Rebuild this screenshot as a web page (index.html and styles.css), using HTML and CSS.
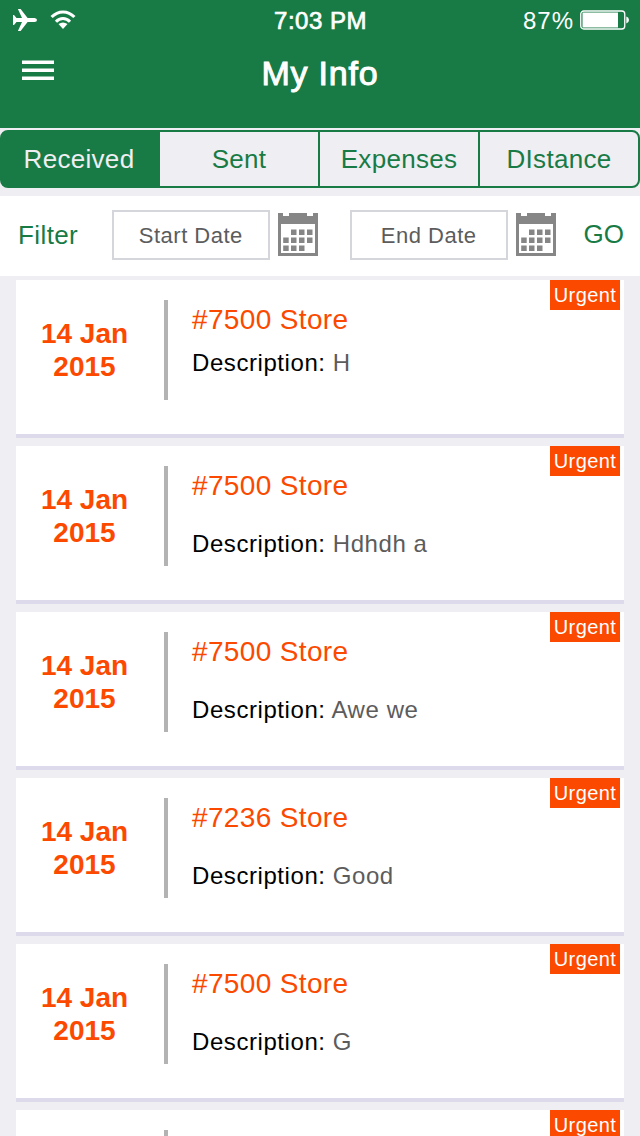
FILE: index.html
```html
<!DOCTYPE html>
<html lang="en">

<head>
	<meta charset="UTF-8">
	<title>My Info</title>
	<link rel="stylesheet" href="styles.css">
</head>

<body>
	<!-- Icons used more than once -->
	<svg class="icon-defs" width="0" height="0">
		<symbol id="calendar" viewBox="0 0 40 43">
			<path fill="#868686" fill-rule="evenodd" d="M0 0H5V3H11V0H29V3H35V0H40V43H0ZM3 11V40H37V11Z" />
			<path fill="#868686" d="M13 16.500h5.500v5.500H13zM21 16.500h5.500v5.500H21zM29 16.500h5.500v5.500H29zM5.200 24.500h5.500V30H5.200zM13 24.500h5.500V30H13zM21 24.500h5.500V30H21zM29 24.500h5.500V30H29zM5.200 32.500h5.500V38H5.200zM13 32.500h5.500V38H13zM21 32.500h5.500V38H21z" />
		</symbol>
	</svg>

	<header class="header">
		<div class="status-bar">
			<div class="status-left">
				<svg class="plane" width="24" height="22" viewBox="0 0 24 22" fill="#fff">
					<path d="M0 6H1L3.500 8.900H9L4.900 0H7.600L14.600 8.900H21.500Q24 9.200 24 11Q24 12.800 21.500 13.100H14.600L7.600 22H4.900L9 13.100H3.500L1 16H0Z" />
				</svg>
				<svg class="wifi" width="26" height="20" viewBox="0 0 26 20">
					<path fill="none" stroke="#fff" stroke-width="3" d="M1.600 7.100C8 .2 18 .2 24.400 7.100M6 11.700C9.900 7.500 16.100 7.500 20 11.700" />
					<path fill="#fff" d="M13 19L8.500 14.100Q13 10.700 17.500 14.100Z" />
				</svg>
			</div>
			<div class="time">7:03 PM</div>
			<div class="status-right">
				<span class="percent">87%</span>
				<svg width="50" height="20" viewBox="0 0 50 20">
					<rect x=".75" y="1" width="44" height="18" rx="3" fill="none" stroke="#fff" stroke-width="1.300" />
					<rect x="2.500" y="2.500" width="35.500" height="15" fill="#fff" />
					<path fill="#fff" d="M46.300 6.500Q49 7.300 49 10T46.300 13.500Z" />
				</svg>
			</div>
		</div>
		<div class="nav-bar">
			<div class="menu"><span></span><span></span><span></span></div>
			<h1>My Info</h1>
		</div>
	</header>

	<nav class="tabs">
		<a class="tab active">Received</a>
		<a class="tab">Sent</a>
		<a class="tab">Expenses</a>
		<a class="tab">DIstance</a>
	</nav>

	<div class="filter">
		<span class="filter-label">Filter</span>
		<div class="date-box">Start Date</div>
		<svg class="calendar" width="40" height="43"><use href="#calendar" /></svg>
		<div class="date-box end">End Date</div>
		<svg class="calendar" width="40" height="43"><use href="#calendar" /></svg>
		<span class="go">GO</span>
	</div>

	<main class="list">
		<div class="card short">
			<div class="date">14 Jan<br>2015</div>
			<div class="info">
				<h2>#7500 Store</h2>
				<p>Description: <span>H</span></p>
			</div>
			<div class="urgent">Urgent</div>
		</div>
		<div class="card">
			<div class="date">14 Jan<br>2015</div>
			<div class="info">
				<h2>#7500 Store</h2>
				<p>Description: <span>Hdhdh a</span></p>
			</div>
			<div class="urgent">Urgent</div>
		</div>
		<div class="card">
			<div class="date">14 Jan<br>2015</div>
			<div class="info">
				<h2>#7500 Store</h2>
				<p>Description: <span>Awe we</span></p>
			</div>
			<div class="urgent">Urgent</div>
		</div>
		<div class="card">
			<div class="date">14 Jan<br>2015</div>
			<div class="info">
				<h2>#7236 Store</h2>
				<p>Description: <span>Good</span></p>
			</div>
			<div class="urgent">Urgent</div>
		</div>
		<div class="card">
			<div class="date">14 Jan<br>2015</div>
			<div class="info">
				<h2>#7500 Store</h2>
				<p>Description: <span>G</span></p>
			</div>
			<div class="urgent">Urgent</div>
		</div>
		<div class="card last">
			<div class="date"></div>
			<div class="urgent">Urgent</div>
		</div>
	</main>
</body>

</html>
```
FILE: styles.css
```css
* {
	box-sizing: border-box;
	margin: 0;
	padding: 0;
}

body {
	height: 1136px;
	overflow: hidden;
	background: #efeef3;
	font-family: "Liberation Sans", Arial, sans-serif;
}

svg {
	display: block;
	flex-shrink: 0;
}

.icon-defs {
	position: absolute;
}

/* Header */
.header {
	height: 128px;
	background: #187b45;
	color: #fff;
}

.status-bar {
	height: 40px;
	display: grid;
	grid-template-columns: 1fr auto 1fr;
	align-items: center;
	padding: 0 11px 0 13px;
	font-size: 24px;
}

.status-left,
.status-right {
	display: flex;
	align-items: center;
}

.status-left {
	gap: 13px;
}

.status-right {
	justify-content: flex-end;
	gap: 6px;
	margin-right: -1px;
}

.time {
	letter-spacing: 0.5px;
	-webkit-text-stroke: 0.7px #fff;
	padding: 1px 1px 0 0;
}

.percent {
	letter-spacing: 1px;
	padding-top: 1px;
}

.nav-bar {
	height: 66px;
	display: grid;
	grid-template-columns: 1fr auto 1fr;
	align-items: center;
	padding: 0 22px;
}

.menu {
	width: 32px;
	display: flex;
	flex-direction: column;
	gap: 4px;
	margin-top: -6px;
}

.menu span {
	height: 4px;
	background: #fff;
	border-top: 1px solid #8bbda2;
}

h1 {
	font-size: 34px;
	font-weight: normal;
	letter-spacing: 0.8px;
	-webkit-text-stroke: 1px #fff;
}

/* Tabs */
.tabs {
	display: flex;
	height: 58px;
	margin: 2px 0 8px;
	border: 2px solid #187b45;
	border-radius: 8px;
}

.tab {
	width: 160px;
	display: flex;
	align-items: center;
	justify-content: center;
	border-right: 2px solid #187b45;
	color: #187b45;
	font-size: 26px;
	letter-spacing: 0.3px;
}

.tab:first-child {
	width: 158px;
	padding-right: 2px;
}

.tab:last-child {
	width: 158px;
	border-right: none;
}

.tab.active {
	background: #187b45;
	border-radius: 4px 0 0 4px;
	color: #efeef3;
}

/* Date filter */
.filter {
	height: 80px;
	display: flex;
	align-items: center;
	padding: 0 16px 2px 18px;
	background: #fff;
	color: #187b45;
	font-size: 26px;
}

.filter-label {
	width: 94px;
	letter-spacing: 0.4px;
}

.date-box {
	width: 158px;
	height: 50px;
	display: flex;
	align-items: center;
	justify-content: center;
	margin-right: 8px;
	padding-top: 1px;
	border: 2px solid #d5d6dc;
	color: #5c5c5c;
	font-size: 22px;
	letter-spacing: 0.5px;
}

.date-box.end {
	margin-left: 32px;
}

.calendar {
	margin-bottom: 1px;
}

.go {
	margin: 0 0 2px 28px;
}

/* Cards */
.list {
	height: 860px;
	padding: 4px 16px 0;
	overflow: hidden;
}

.card {
	position: relative;
	height: 158px;
	display: flex;
	margin-bottom: 8px;
	padding: 20px 0 0 12px;
	background: #fff;
	border-bottom: 4px solid #dddaec;
}

/* Cut off by the bottom of the screen */
.card.last {
	height: 26px;
	margin-bottom: 0;
	border-bottom: none;
	overflow: hidden;
}

.date {
	width: 140px;
	height: 100px;
	padding: 17px 23px 0 0;
	border-right: 4px solid #b3b3b3;
	color: #fb4900;
	font-size: 28px;
	font-weight: bold;
	line-height: 33px;
	text-align: center;
}

.card.last .date {
	height: 6px;
	padding: 0;
}

.info {
	padding-left: 24px;
}

h2 {
	height: 40px;
	color: #fb4900;
	font-size: 28px;
	font-weight: normal;
	line-height: 40px;
	letter-spacing: 0.35px;
}

.info p {
	margin-top: 23px;
	font-size: 24px;
	line-height: 30px;
	letter-spacing: 0.57px;
}

.short .info p {
	margin-top: 8px;
}

.info p span {
	color: #5c5c5c;
}

.urgent {
	position: absolute;
	top: 0;
	right: 4px;
	width: 70px;
	height: 30px;
	background: #fb4900;
	color: #fff;
	font-size: 20px;
	line-height: 31px;
	letter-spacing: 0.4px;
	text-align: center;
}
```
